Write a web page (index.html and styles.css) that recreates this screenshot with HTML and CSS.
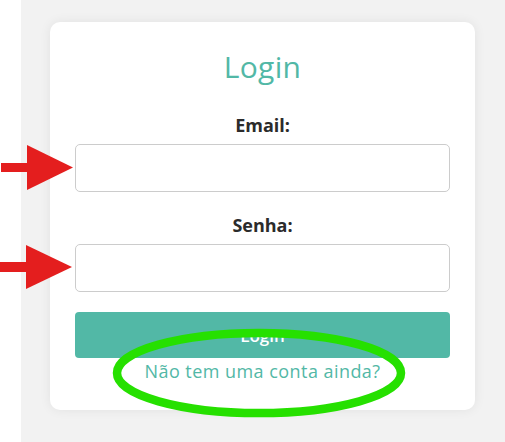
FILE: index.html
```html
<!DOCTYPE html>
<html lang="pt-BR">
<head>
<meta charset="utf-8">
<title>Login</title>
<link rel="stylesheet" href="styles.css">
</head>
<body>
<div class="side"></div>
<main class="main">
  <form class="card">
    <h1 class="title">Login</h1>
    <label class="label" for="email">Email:</label>
    <input class="field" id="email" type="email">
    <label class="label label-gap" for="senha">Senha:</label>
    <input class="field" id="senha" type="password">
    <button class="btn" type="button">Login</button>
    <a class="link" href="#">Não tem uma conta ainda?</a>
  </form>
</main>
<svg class="marks" width="505" height="442" viewBox="0 0 505 442" aria-hidden="true">
  <rect x="1" y="163" width="28" height="9" fill="#e41e1e"/>
  <polygon points="27,145 73,167.5 27,190" fill="#e41e1e"/>
  <rect x="0" y="262" width="29" height="10" fill="#e41e1e"/>
  <polygon points="26,245 72,267 26,289" fill="#e41e1e"/>
  <ellipse cx="259" cy="373" rx="142" ry="40" fill="none" stroke="#26e000" stroke-width="8.5"/>
</svg>
</body>
</html>
```
FILE: styles.css
```css
html, body {
  margin: 0;
  padding: 0;
  height: 100%;
}
body {
  display: flex;
  background: #ffffff;
  font-family: "Open Sans", "Liberation Sans", sans-serif;
  overflow: hidden;
}
.side {
  width: 21px;
  flex: none;
  background: #ffffff;
}
.main {
  flex: 1;
  background: #f2f2f2;
  padding: 22px 0 0 29px;
}
.card {
  box-sizing: border-box;
  width: 425px;
  height: 388px;
  background: #ffffff;
  border-radius: 10px;
  box-shadow: 0 0 12px rgba(0, 0, 0, 0.07);
  padding: 27px 25px 0;
  display: flex;
  flex-direction: column;
  align-items: stretch;
}
.title {
  margin: 0;
  font-size: 30px;
  line-height: 36px;
  font-weight: 400;
  color: #52b8a6;
  text-align: center;
  letter-spacing: 0.3px;
}
.label {
  display: block;
  margin-top: 29px;
  font-size: 18px;
  line-height: 22px;
  font-weight: 700;
  color: #2b2b2b;
  text-align: center;
}
.label-gap {
  margin-top: 22px;
}
.field {
  box-sizing: border-box;
  margin-top: 8px;
  height: 48px;
  width: 100%;
  border: 1px solid #cccccc;
  border-radius: 5px;
  background: #ffffff;
  padding: 0 10px;
}
.btn {
  margin-top: 20px;
  height: 46px;
  border: none;
  border-radius: 4px;
  background: #52b8a6;
  color: #ffffff;
  font-family: inherit;
  font-size: 17px;
  font-weight: 600;
}
.link {
  display: block;
  margin-top: 2px;
  font-size: 18px;
  line-height: 22px;
  color: #52b8a6;
  text-align: center;
  text-decoration: none;
  letter-spacing: 0.45px;
}
.marks {
  position: absolute;
  left: 0;
  top: 0;
  pointer-events: none;
}
```
